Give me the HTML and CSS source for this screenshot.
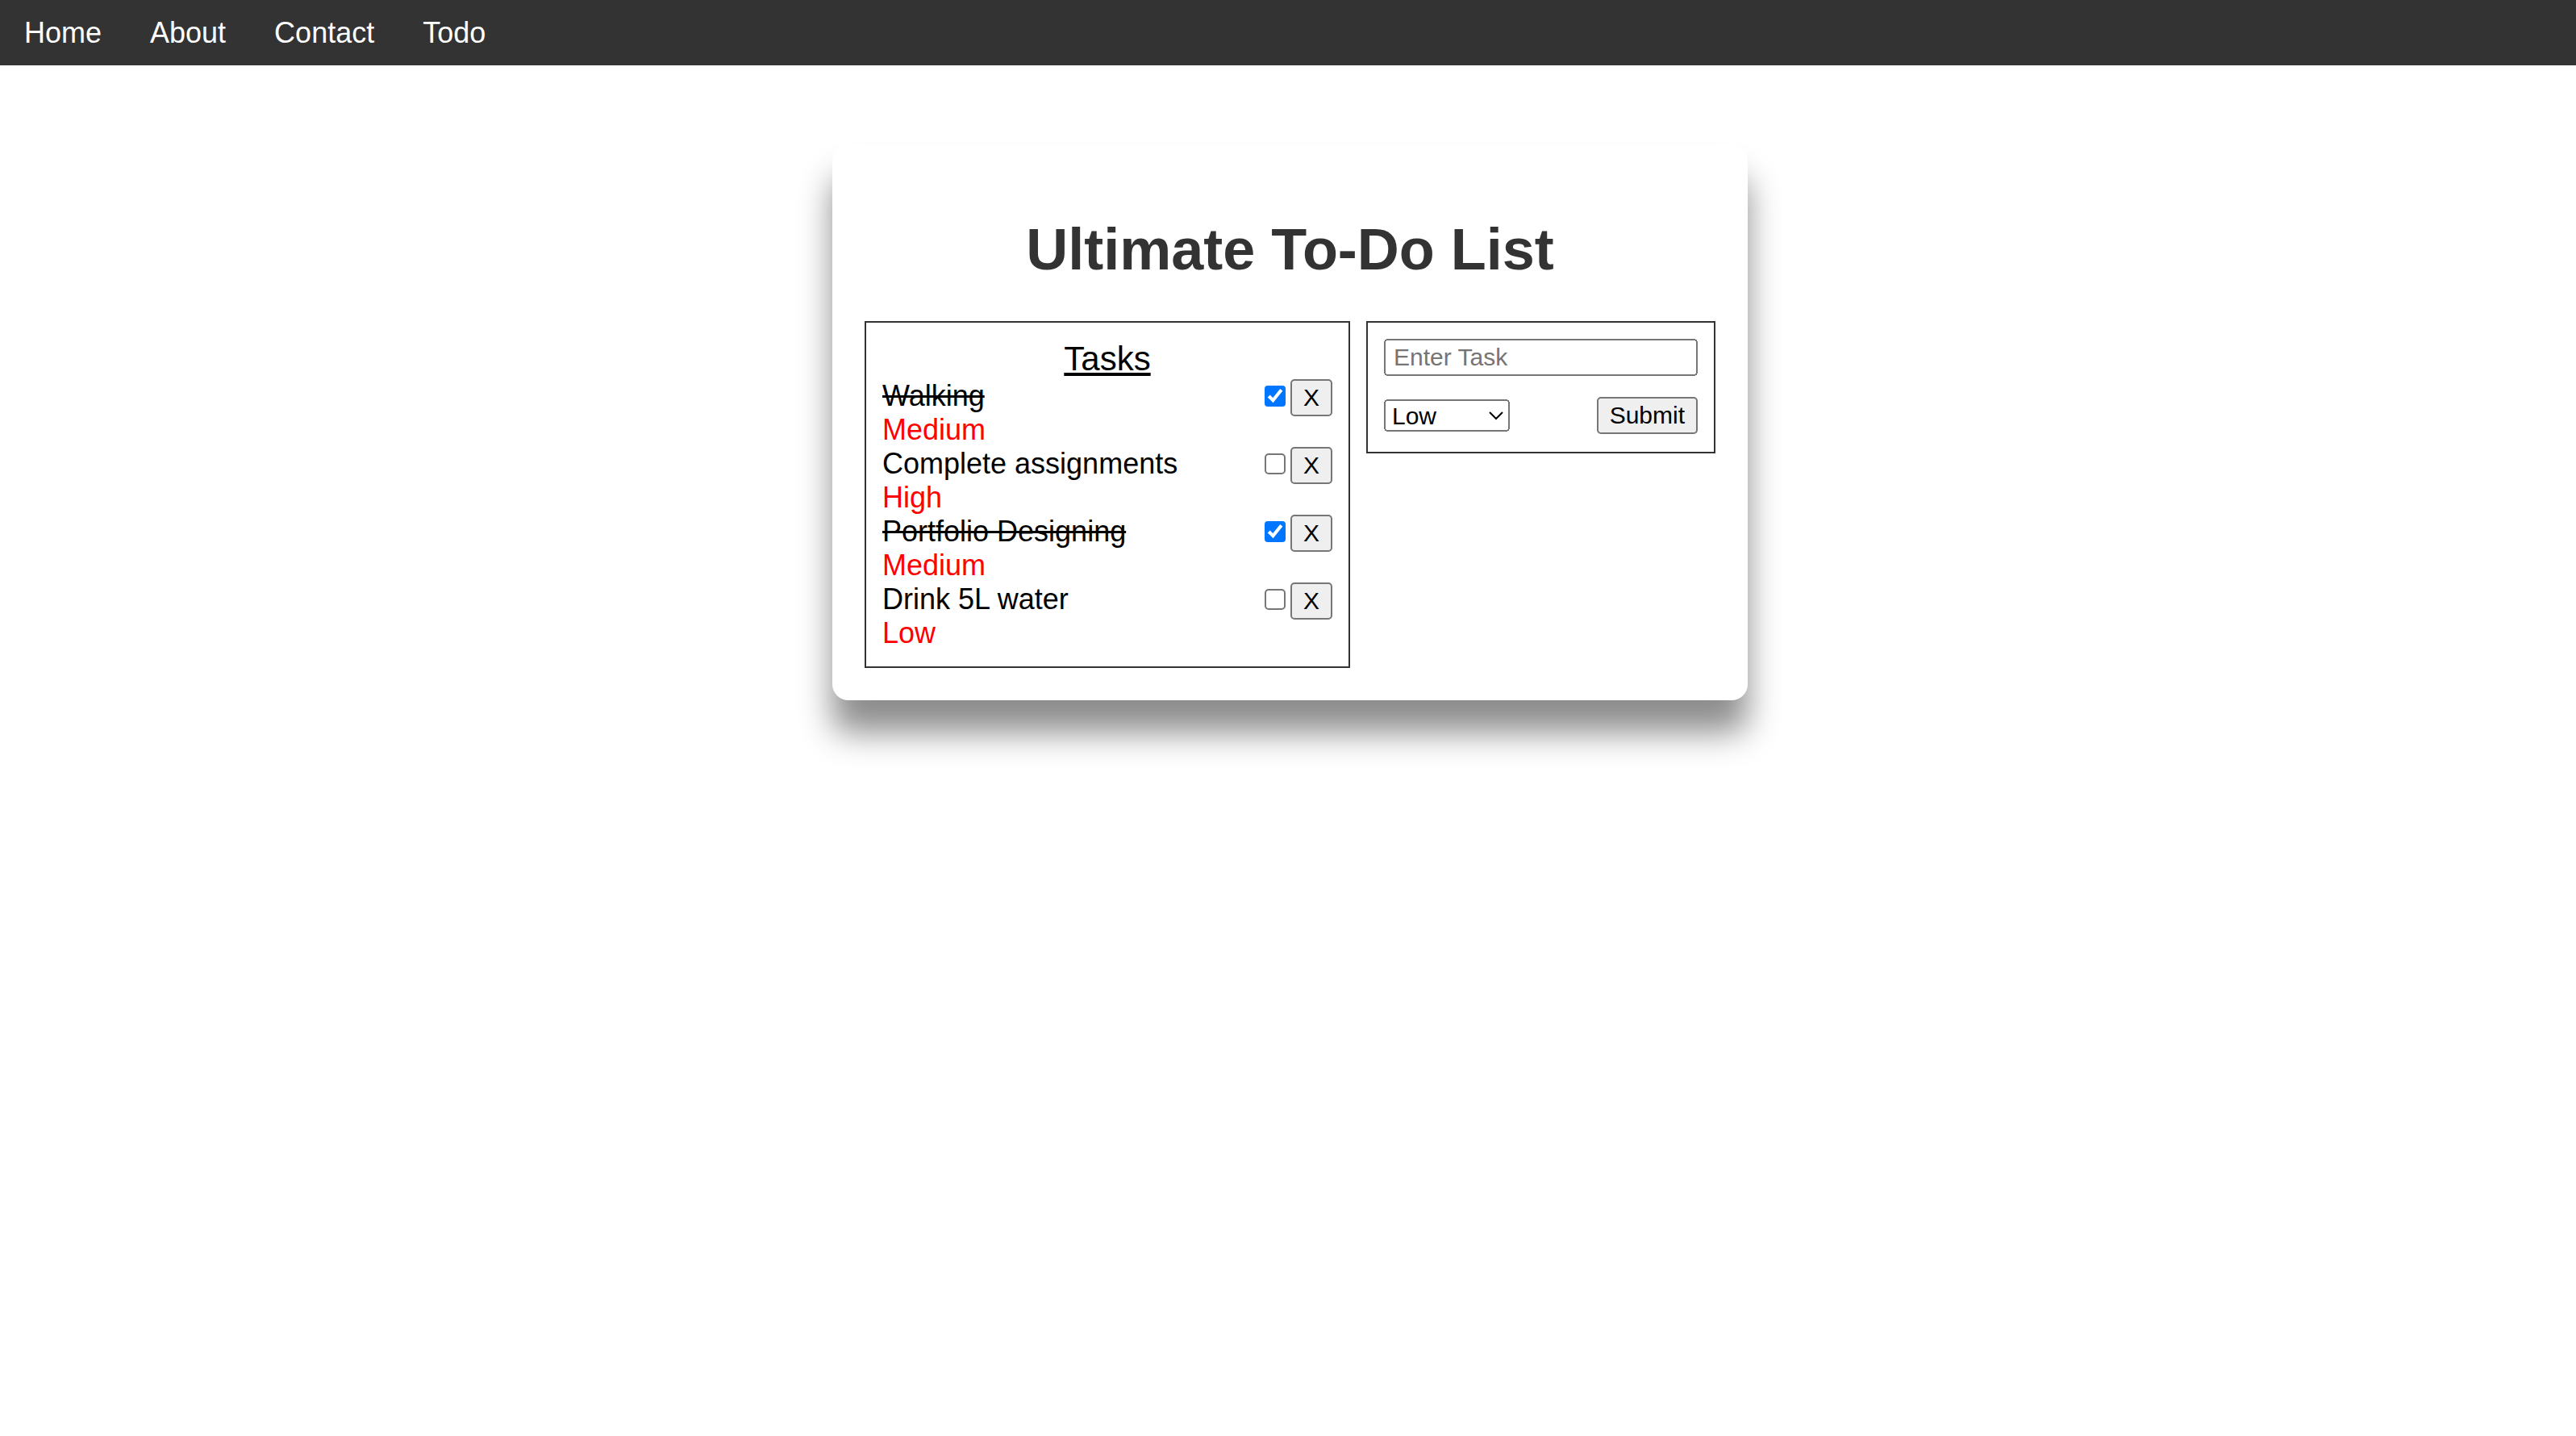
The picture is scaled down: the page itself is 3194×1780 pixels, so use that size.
FILE: index.html
```html
<!DOCTYPE html>
<html lang="en">
<head>
<meta charset="utf-8">
<title>Ultimate To-Do List</title>
<link rel="stylesheet" href="styles.css">
</head>
<body>
<nav class="navbar">
  <a href="#" class="nav-link">Home</a>
  <a href="#" class="nav-link">About</a>
  <a href="#" class="nav-link">Contact</a>
  <a href="#" class="nav-link">Todo</a>
</nav>
<div class="page">
  <main class="card">
    <h1 class="title">Ultimate To-Do List</h1>
    <div class="panels">
      <section class="tasks">
        <h2 class="tasks-heading">Tasks</h2>
        <ul class="task-list">
          <li class="task done">
            <div class="task-text"><span class="task-name">Walking</span><span class="task-priority">Medium</span></div>
            <div class="task-controls"><input type="checkbox" class="task-check" checked><button type="button" class="btn btn-delete">X</button></div>
          </li>
          <li class="task">
            <div class="task-text"><span class="task-name">Complete assignments</span><span class="task-priority">High</span></div>
            <div class="task-controls"><input type="checkbox" class="task-check"><button type="button" class="btn btn-delete">X</button></div>
          </li>
          <li class="task done">
            <div class="task-text"><span class="task-name">Portfolio Designing</span><span class="task-priority">Medium</span></div>
            <div class="task-controls"><input type="checkbox" class="task-check" checked><button type="button" class="btn btn-delete">X</button></div>
          </li>
          <li class="task">
            <div class="task-text"><span class="task-name">Drink 5L water</span><span class="task-priority">Low</span></div>
            <div class="task-controls"><input type="checkbox" class="task-check"><button type="button" class="btn btn-delete">X</button></div>
          </li>
        </ul>
      </section>
      <form class="task-form">
        <input type="text" class="task-input" placeholder="Enter Task">
        <div class="form-row">
          <select class="priority-select">
            <option>Low</option>
            <option>Medium</option>
            <option>High</option>
          </select>
          <button type="button" class="btn btn-submit">Submit</button>
        </div>
      </form>
    </div>
  </main>
</div>
</body>
</html>
```
FILE: styles.css
```css
html {
  zoom: 2;
}

body {
  margin: 0;
  font-family: "Liberation Sans", Arial, sans-serif;
  background: #fff;
}

.navbar {
  display: flex;
  background: #333;
}

.nav-link {
  display: block;
  color: #fff;
  text-decoration: none;
  font-size: 18px;
  line-height: 20.5px;
  padding: 10px 15px;
}

.page {
  padding: 49.5px 0 80px;
}

.card {
  width: fit-content;
  margin: 0 auto 0 calc(50% - 282.5px);
  padding: 20px;
  background: #fff;
  border-radius: 10px;
  box-shadow: 0 20px 20px rgba(0, 0, 0, 0.45);
}

.title {
  margin: 24px 0;
  font-size: 36px;
  font-weight: bold;
  color: #333;
  text-align: center;
}

.panels {
  display: flex;
  gap: 10px;
  align-items: flex-start;
}

.tasks {
  width: 301px;
  box-sizing: border-box;
  border: 1px solid #333;
  padding: 10px;
  font-size: 18px;
  color: #000;
}

.tasks-heading {
  margin: 0;
  text-align: center;
  font-size: 21px;
  font-weight: normal;
  line-height: 25px;
  text-decoration: underline;
}

.task-list {
  list-style: none;
  margin: 0;
  padding: 0;
}

.task {
  display: flex;
  justify-content: space-between;
  align-items: flex-start;
}

.task-text {
  display: flex;
  flex-direction: column;
}

.task.done .task-name {
  text-decoration: line-through;
}

.task-priority {
  color: #f00;
}

.task-controls {
  display: flex;
  align-items: flex-start;
}

.task-check {
  width: 13px;
  height: 13px;
  margin: 4px 3px 0 4px;
}

.btn {
  font-family: "Liberation Sans", Arial, sans-serif;
  font-size: 15px;
  margin: 0;
}

.btn-delete {
  width: 26px;
  height: 23px;
  padding: 0;
}

.btn-submit {
  height: 23px;
  padding: 0 6px;
}

.task-form {
  width: 216.5px;
  box-sizing: border-box;
  border: 1px solid #333;
  padding: 10px 10px 11px;
  margin: 0;
}

.task-input {
  display: block;
  width: 100%;
  height: 23px;
  box-sizing: border-box;
  margin: 0 0 13px;
  padding: 1px 4px;
  font-family: "Liberation Sans", Arial, sans-serif;
  font-size: 15px;
}

.form-row {
  display: flex;
  justify-content: space-between;
  align-items: center;
}

.priority-select {
  width: 78px;
  height: 20px;
  font-family: "Liberation Sans", Arial, sans-serif;
  font-size: 15px;
  margin: 0;
}
```
